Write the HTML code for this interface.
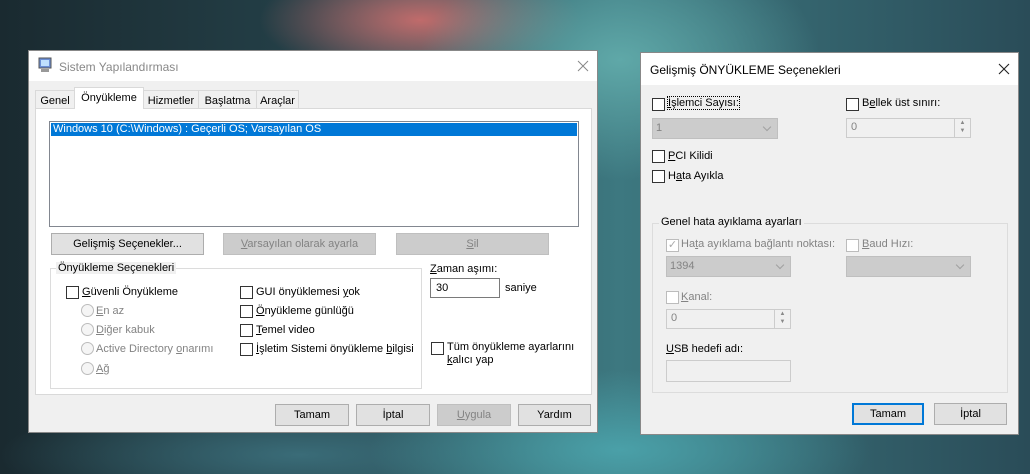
<!DOCTYPE html>
<html><head><meta charset="utf-8"><style>
*{margin:0;padding:0;box-sizing:border-box}
body{width:1030px;height:474px;overflow:hidden;position:relative;font-family:"Liberation Sans",sans-serif;font-size:11px;color:#000;
background:
radial-gradient(ellipse 200px 120px at 620px 60px,#5fa8a8 0%,rgba(60,130,140,0) 100%),
radial-gradient(ellipse 250px 80px at 620px 450px,#4aa0a8 0%,rgba(40,100,110,0) 100%),
radial-gradient(ellipse 300px 60px at 300px 455px,#3a6c78 0%,rgba(30,60,70,0) 100%),
radial-gradient(ellipse 160px 60px at 420px 20px,#c06b6b 0%,rgba(120,60,60,0) 100%),
linear-gradient(90deg,#1a2a30 0%,#244048 30%,#3d7880 60%,#2a4c58 100%);}
.a{position:absolute;white-space:nowrap}
.dlg{position:absolute;background:#f0f0f0;border:1px solid #888}
.tb{position:absolute;left:0;top:0;right:0;background:#fff}
.btn{position:absolute;background:#e1e1e1;border:1px solid #adadad;text-align:center;line-height:20px;height:22px}
.dis{background:#cccccc;border-color:#bfbfbf;color:#838383}
.cb{position:absolute;width:13px;height:13px;border:1px solid #333;background:#fff}
.cbd{border-color:#bcbcbc}
.rd{position:absolute;width:13px;height:13px;border:1px solid #bcbcbc;border-radius:50%;background:#f5f5f5}
.g{color:#838383}
.grp{position:absolute;border:1px solid #dcdcdc}
.leg{position:absolute;background:#f0f0f0;padding:0 2px;white-space:nowrap}
.combo{position:absolute;background:#ccc;border:1px solid #bfbfbf;color:#838383;padding-left:3px;line-height:19px}
.combo:after{content:"";position:absolute;right:7px;top:5px;width:5px;height:5px;border-right:1px solid #a0a0a0;border-bottom:1px solid #a0a0a0;transform:rotate(45deg)}
.spin{position:absolute;background:#f0f0f0;border:1px solid #ccc;color:#838383;padding-left:4px;line-height:17px}
.spin b{position:absolute;right:0;top:0;width:16px;height:100%;border-left:1px solid #ccc;font-size:6px;color:#888;text-align:center;line-height:8px;font-weight:normal}
.tab{position:absolute;top:39px;height:19px;border:1px solid #d9d9d9;border-bottom:none;text-align:center;padding-top:4px;white-space:nowrap}
u{text-decoration:underline}
</style></head><body>

<div class="dlg" style="left:28px;top:50px;width:570px;height:383px">
 <div class="tb" style="height:30px"></div>
 <svg class="a" style="left:8px;top:6px" width="16" height="16" viewBox="0 0 16 16"><rect x="2" y="1" width="12" height="10" fill="#6b8fd6" stroke="#555" stroke-width="1"/><rect x="4" y="3" width="8" height="6" fill="#bfe0ff"/><rect x="4" y="12" width="8" height="3" fill="#999"/></svg>
 <div class="a" style="left:30px;top:9px;font-size:12px;color:#888">Sistem Yapılandırması</div>
 <svg class="a" style="left:548px;top:9px" width="12" height="12"><path d="M1 1L11 11M11 1L1 11" stroke="#888" stroke-width="1"/></svg>
 <div class="tab" style="left:6px;width:40px">Genel</div>
 <div class="tab" style="left:45px;top:36px;height:22px;width:70px;background:#fff;z-index:2">Önyükleme</div>
 <div class="tab" style="left:114px;width:56px">Hizmetler</div>
 <div class="tab" style="left:169px;width:59px">Başlatma</div>
 <div class="tab" style="left:227px;width:43px">Araçlar</div>
 <div class="a" style="left:6px;top:57px;width:557px;height:287px;background:#fff;border:1px solid #d9d9d9"></div>
 <div class="a" style="left:20px;top:70px;width:530px;height:106px;border:1px solid #828790;background:#fff">
  <div style="margin:1px;background:#0078d7;color:#fff;height:13px;line-height:13px;padding-left:2px">Windows 10 (C:\Windows) : Geçerli OS; Varsayılan OS</div>
 </div>
 <div class="btn" style="left:22px;top:182px;width:153px">Gelişmiş Seçenekler...</div>
 <div class="btn dis" style="left:194px;top:182px;width:153px"><u>V</u>arsayılan olarak ayarla</div>
 <div class="btn dis" style="left:367px;top:182px;width:153px"><u>S</u>il</div>
 <div class="grp" style="left:21px;top:217px;width:372px;height:121px"></div>
 <div class="leg" style="left:27px;top:211px">Önyükleme Seçenekleri</div>
 <div class="cb" style="left:37px;top:235px"></div><div class="a" style="left:53px;top:235px"><u>G</u>üvenli Önyükleme</div>
 <div class="rd" style="left:52px;top:253px"></div><div class="a g" style="left:67px;top:254px"><u>E</u>n az</div>
 <div class="rd" style="left:52px;top:272px"></div><div class="a g" style="left:67px;top:273px"><u>D</u>iğer kabuk</div>
 <div class="rd" style="left:52px;top:291px"></div><div class="a g" style="left:67px;top:292px">Active Directory <u>o</u>narımı</div>
 <div class="rd" style="left:52px;top:311px"></div><div class="a g" style="left:67px;top:312px"><u>A</u>ğ</div>
 <div class="cb" style="left:211px;top:235px"></div><div class="a" style="left:227px;top:235px">GUI önyüklemesi <u>y</u>ok</div>
 <div class="cb" style="left:211px;top:254px"></div><div class="a" style="left:227px;top:254px"><u>Ö</u>nyükleme günlüğü</div>
 <div class="cb" style="left:211px;top:273px"></div><div class="a" style="left:227px;top:273px"><u>T</u>emel video</div>
 <div class="cb" style="left:211px;top:292px"></div><div class="a" style="left:227px;top:292px"><u>İ</u>şletim Sistemi önyükleme <u>b</u>ilgisi</div>
 <div class="a" style="left:401px;top:212px"><u>Z</u>aman aşımı:</div>
 <div class="a" style="left:401px;top:227px;width:70px;height:20px;border:1px solid #7a7a7a;background:#fff;padding:3px 0 0 5px">30</div>
 <div class="a" style="left:476px;top:231px">saniye</div>
 <div class="cb" style="left:402px;top:291px"></div><div class="a" style="left:418px;top:290px;line-height:13px">Tüm önyükleme ayarlarını<br><u>k</u>alıcı yap</div>
 <div class="btn" style="left:246px;top:353px;width:74px">Tamam</div>
 <div class="btn" style="left:327px;top:353px;width:74px">İptal</div>
 <div class="btn dis" style="left:408px;top:353px;width:74px"><u>U</u>ygula</div>
 <div class="btn" style="left:489px;top:353px;width:73px">Yardım</div>
</div>

<div class="dlg" style="left:640px;top:52px;width:379px;height:383px">
 <div class="tb" style="height:32px"></div>
 <div class="a" style="left:9px;top:10px;font-size:12px">Gelişmiş ÖNYÜKLEME Seçenekleri</div>
 <svg class="a" style="left:357px;top:10px" width="12" height="12"><path d="M1 1L11 11M11 1L1 11" stroke="#222" stroke-width="1.1"/></svg>
 <div class="cb" style="left:11px;top:45px"></div><div class="a" style="left:27px;top:44px;outline:1px dotted #000"><u>İ</u>şlemci Sayısı:</div>
 <div class="combo" style="left:11px;top:65px;width:126px;height:21px">1</div>
 <div class="cb" style="left:205px;top:45px"></div><div class="a" style="left:221px;top:44px">B<u>e</u>llek üst sınırı:</div>
 <div class="spin" style="left:205px;top:65px;width:125px;height:20px">0<b>▲<br>▼</b></div>
 <div class="cb" style="left:11px;top:97px"></div><div class="a" style="left:27px;top:97px"><u>P</u>CI Kilidi</div>
 <div class="cb" style="left:11px;top:117px"></div><div class="a" style="left:27px;top:117px">H<u>a</u>ta Ayıkla</div>
 <div class="grp" style="left:11px;top:170px;width:356px;height:170px"></div>
 <div class="leg" style="left:18px;top:163px">Genel hata ayıklama ayarları</div>
 <div class="cb cbd" style="left:25px;top:186px;color:#aaa;font-size:11px;line-height:11px;text-align:center">✓</div><div class="a g" style="left:40px;top:185px">Ha<u>t</u>a ayıklama bağlantı noktası:</div>
 <div class="combo" style="left:25px;top:203px;width:125px;height:21px">1394</div>
 <div class="cb cbd" style="left:205px;top:186px"></div><div class="a g" style="left:221px;top:185px"><u>B</u>aud Hızı:</div>
 <div class="combo" style="left:205px;top:203px;width:125px;height:21px"></div>
 <div class="cb cbd" style="left:25px;top:238px"></div><div class="a g" style="left:40px;top:238px"><u>K</u>anal:</div>
 <div class="spin" style="left:25px;top:256px;width:125px;height:20px">0<b>▲<br>▼</b></div>
 <div class="a" style="left:25px;top:290px"><u>U</u>SB hedefi adı:</div>
 <div class="a" style="left:25px;top:307px;width:125px;height:22px;border:1px solid #ccc;background:#f0f0f0"></div>
 <div class="btn" style="left:211px;top:350px;width:72px;border:2px solid #0078d7;line-height:18px">Tamam</div>
 <div class="btn" style="left:293px;top:350px;width:73px">İptal</div>
</div>
</body></html>
